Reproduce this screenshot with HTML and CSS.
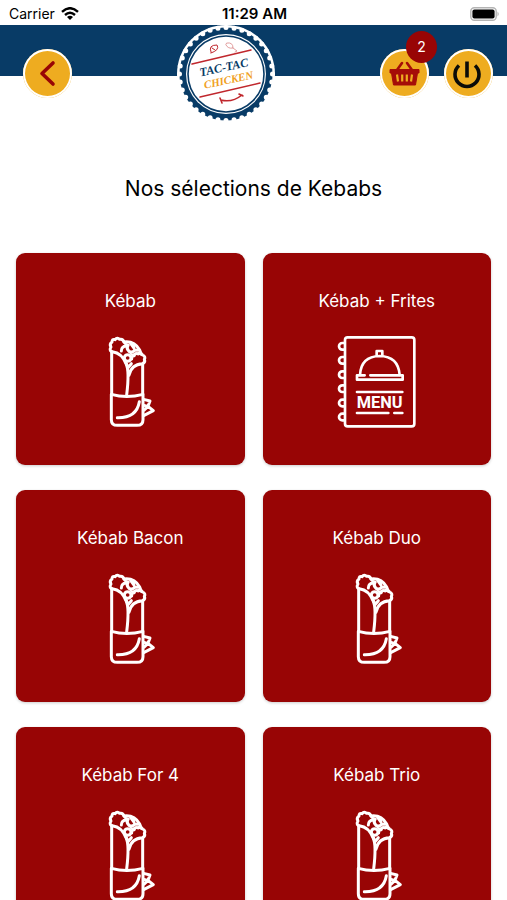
FILE: index.html
```
<!DOCTYPE html>
<html lang="fr">
    <head>
        <meta charset="utf-8">
        <title>Tac-Tac Chicken - Kebabs</title>
        <meta name="viewport" content="width=device-width, initial-scale=1.0">
        <link rel="stylesheet" href="styles.css">
    </head>
    <body>
        <!-- shared card icon -->
        <svg class="sprite" aria-hidden="true">
            <symbol id="icon-kebab" viewBox="-16 33 276 276">
                <g fill="none" stroke="currentColor" stroke-width="9" stroke-linecap="round" stroke-linejoin="round">
                    <path d="M67 80V208M160 116V208"/>
                    <path d="M66 208Q112 221 161 208V284Q161 301 143 301H84Q66 301 66 284Z"/>
                    <path d="M84 278Q142 279 150 230"/>
                    <path d="M67 80Q59 75 65 66Q59 57 68 51Q68 41 77 44Q84 36 91 43Q101 41 104 51Q110 60 116 61"/>
                    <path d="M69 80Q98 84 110 116Q121 138 112 210"/>
                    <path d="M119 151Q125 118 160 116Q169 111 165 103Q170 95 160 90Q153 82 146 87Q137 83 134 92Q126 94 127 102"/>
                    <path d="M104 51Q135 47 151 75L156 88M111 62Q96 64 96 78M116 61Q110 71 119 79Q128 84 136 76L150 75M122 53L134 69M134 92L121 80"/>
                    <circle cx="115" cy="99" r="10"/>
                    <path d="M110 113L116 128L126 116"/>
                    <path d="M163 223L182 228L176 244L192 257L163 272M164 241L176 244L165 255"/>
                </g>
            </symbol>
        </svg>

        <div class="app">
            <div class="status">
                <div class="status__carrier">
                    <span>Carrier</span>
                    <svg class="status__wifi" viewBox="0 0 18 13" aria-hidden="true">
                        <g fill="none" stroke="#000" stroke-width="2.4">
                            <path d="M1 4.8Q9 -2.4 17 4.8"/>
                            <path d="M4 8Q9 3.5 14 8"/>
                        </g>
                        <path d="M9 13L6 10Q9 7.6 12 10Z"/>
                    </svg>
                </div>
                <time class="status__time">11:29 AM</time>
                <svg class="status__battery" viewBox="0 0 30 14" aria-hidden="true">
                    <rect x=".8" y=".8" width="25.4" height="12.4" rx="3.5" fill="#fff" stroke="#b4b4b4" stroke-width="1.4"/>
                    <rect x="2.4" y="2.4" width="22.2" height="9.2" rx="2"/>
                    <path d="M27.5 4.5Q30 7 27.5 9.5Z" fill="#b4b4b4"/>
                </svg>
            </div>

            <header class="header">
                <button class="round-btn" type="button" aria-label="Retour">
                    <svg viewBox="0 0 49 49" aria-hidden="true">
                        <path d="M30 14L19 24.500L30 35" fill="none" stroke="#980505" stroke-width="3.6" stroke-linecap="round" stroke-linejoin="round"/>
                    </svg>
                </button>

                <svg class="logo" viewBox="0 0 98 98" role="img" aria-label="Tac-Tac Chicken">
                    <circle cx="49" cy="49" r="49" fill="#fff"/>
                    <circle cx="49" cy="49" r="46.500" fill="#083b66"/>
                    <!-- notched edge of the seal -->
                    <circle cx="49" cy="49" r="46.500" fill="none" stroke="#fff" stroke-width="5" stroke-linecap="round" pathLength="36" stroke-dasharray="0 1"/>
                    <circle cx="49" cy="49" r="40" fill="#fff"/>
                    <circle cx="49" cy="49" r="38" fill="none" stroke="#083b66" stroke-width="1.600"/>
                    <g fill="none" stroke="#c0272d" stroke-linecap="round">
                        <path d="M15 39L74 25M23 72L83 58" stroke-width="1.500"/>
                        <path d="M44 75Q55 78 65 70M43 73L45 78M62 69L66 71" stroke-width="1.600"/>
                        <path d="M34 27Q31 20 40 20Q43 25 34 28ZM35 23L38 25" stroke-width="1"/>
                        <path d="M50 18Q56 17 56 23Q51 24 49 20ZM56 23L60 26L58 27" stroke-width=".8" stroke="#d98585"/>
                    </g>
                    <g class="logo__text" transform="rotate(-12 49 48)" text-anchor="middle">
                        <text x="48" y="46" fill="#083b66">TAC-TAC</text>
                        <text class="logo__text-small" x="50" y="59" fill="#f0a01e">CHICKEN</text>
                    </g>
                </svg>

                <div class="header__actions">
                    <button class="round-btn" type="button" aria-label="Panier">
                        <svg viewBox="0 0 49 49" aria-hidden="true">
                            <path d="M10 20.500H39V24H37.500L35.500 36H13.500L11.500 24H10Z" fill="#a50d08" stroke="#a50d08" stroke-linejoin="round"/>
                            <path d="M17 21L22 14M32 21L27 14" fill="none" stroke="#a50d08" stroke-width="2.600" stroke-linecap="round"/>
                            <path d="M17 25.500L18 32.500M22.200 25.500V32.500M26.800 25.500V32.500M32 25.500L31 32.500" stroke="#eeac20" stroke-width="2.200"/>
                        </svg>
                        <span class="badge">2</span>
                    </button>
                    <button class="round-btn" type="button" aria-label="Déconnexion">
                        <svg viewBox="0 0 49 49" aria-hidden="true">
                            <path d="M15 16.500A12 12 0 1 0 31 16.500M23 12.500V28.500" fill="none" stroke="#0b0b08" stroke-width="3.600"/>
                        </svg>
                    </button>
                </div>
            </header>

            <main class="content">
                <h1 class="title">Nos sélections de Kebabs</h1>
                <div class="cards">
                    <a class="card" href="#">
                        <span class="card__name">Kébab</span>
                        <svg class="card__icon" aria-hidden="true"><use href="#icon-kebab"/></svg>
                    </a>
                    <a class="card" href="#">
                        <span class="card__name">Kébab + Frites</span>
                        <svg class="card__icon" viewBox="20 33 276 276" aria-hidden="true">
                            <g fill="none" stroke="currentColor" stroke-width="8" stroke-linecap="round" stroke-linejoin="round">
                                <rect x="62" y="37" width="208" height="267" rx="8"/>
                                <path d="M60 54H54a10 10 0 0 0 0 20H60M60 96H54a10 10 0 0 0 0 20H60M60 139H54a10 10 0 0 0 0 20H60M60 181H54a10 10 0 0 0 0 20H60M60 224H54a10 10 0 0 0 0 20H60M60 266H54a10 10 0 0 0 0 20H60"/>
                                <path d="M107 150Q110 94 166 93Q222 94 226 150"/>
                                <path d="M157 91V78H174V91"/>
                                <path d="M121 151H98V164H235V151H138"/>
                                <path d="M98 201H234M98 264H192M210 264H234"/>
                            </g>
                            <text class="menu-word" x="166" y="249" text-anchor="middle">MENU</text>
                        </svg>
                    </a>
                    <a class="card" href="#">
                        <span class="card__name">Kébab Bacon</span>
                        <svg class="card__icon" aria-hidden="true"><use href="#icon-kebab"/></svg>
                    </a>
                    <a class="card" href="#">
                        <span class="card__name">Kébab Duo</span>
                        <svg class="card__icon" aria-hidden="true"><use href="#icon-kebab"/></svg>
                    </a>
                    <a class="card" href="#">
                        <span class="card__name">Kébab For 4</span>
                        <svg class="card__icon" aria-hidden="true"><use href="#icon-kebab"/></svg>
                    </a>
                    <a class="card" href="#">
                        <span class="card__name">Kébab Trio</span>
                        <svg class="card__icon" aria-hidden="true"><use href="#icon-kebab"/></svg>
                    </a>
                </div>
            </main>
        </div>
    </body>
</html>
```

FILE: styles.css
```
:root {
    --font-main: Inter, 'Liberation Sans', sans-serif;

    --color-blue: #083b66;
    --color-red: #980505;
    --color-yellow: #eeac20;
    --color-white: #fff;

    --fz-small: 14px;
    --fz-time: 15px;
    --fz-normal: 17px;
    --fz-title: 21px;

    --size-button: 49px;
}
* {
    box-sizing: border-box;
}
body {
    margin: 0;
    font-family: var(--font-main);
    font-size: var(--fz-normal);
    background-color: var(--color-white);
}
.sprite {
    position: absolute;
    width: 0;
    height: 0;
}
.app {
    display: flex;
    flex-direction: column;
    height: 100vh;
}
.status {
    display: grid;
    grid-template-columns: 1fr auto 1fr;
    align-items: center;
    flex: none;
    height: 25px;
    padding: 2px 7px 0 9px;
    font-size: var(--fz-small);
}
.status__carrier {
    display: flex;
    align-items: center;
    gap: 6px;
}
.status__wifi {
    width: 18px;
    height: 13px;
}
.status__time {
    font-size: var(--fz-time);
    font-weight: 600;
}
.status__battery {
    justify-self: end;
    width: 30px;
    height: 14px;
}
.header {
    position: relative;
    z-index: 1;
    display: flex;
    justify-content: space-between;
    align-items: flex-start;
    flex: none;
    height: 51px;
    padding: 0 14px 0 23px;
    background-color: var(--color-blue);
}
.header__actions {
    display: flex;
    gap: 15px;
}
.round-btn {
    position: relative;
    width: var(--size-button);
    height: var(--size-button);
    margin-top: 24px;
    padding: 0;
    border: 0;
    border-radius: 50%;
    background-color: var(--color-yellow);
    box-shadow: inset 0 0 0 2px var(--color-white);
    cursor: pointer;
}
.round-btn svg {
    display: block;
    width: 100%;
    height: 100%;
}
.badge {
    position: absolute;
    top: -18px;
    right: -8px;
    width: 31px;
    height: 32px;
    border-radius: 50%;
    font-family: var(--font-main);
    font-size: var(--fz-small);
    line-height: 32px;
    color: var(--color-white);
    background-color: var(--color-red);
}
.logo {
    width: 98px;
    height: 98px;
}
.logo__text {
    font-family: 'Liberation Serif', serif;
    font-size: 12px;
    font-style: italic;
    font-weight: bold;
}
.logo__text-small {
    font-size: 11px;
}
.content {
    flex: 1;
    min-height: 0;
    padding: 99px 16px 25px;
    overflow-y: auto;
    scrollbar-width: none;
}
.title {
    margin: 0 0 50px;
    font-size: var(--fz-title);
    font-weight: 400;
    line-height: 28px;
    text-align: center;
}
.cards {
    display: grid;
    grid-template-columns: 1fr 1fr;
    gap: 25px 18px;
}
.card {
    display: flex;
    flex-direction: column;
    align-items: center;
    gap: 23px;
    padding: 36px 12px 37px;
    border-radius: 9px;
    color: var(--color-white);
    background-color: var(--color-red);
    box-shadow: 0 1px 3px rgba(0, 0, 0, .2);
    text-decoration: none;
}
.card__name {
    line-height: 24px;
}
.card__icon {
    width: 92px;
    height: 92px;
}
.menu-word {
    font-family: Roboto, sans-serif;
    font-size: 49px;
    font-weight: 700;
    fill: currentColor;
}
```
